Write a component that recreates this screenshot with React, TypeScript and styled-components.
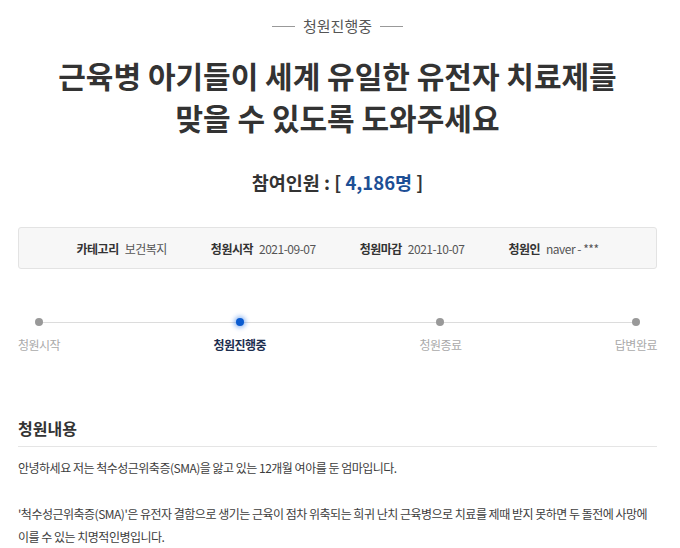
import React from 'react';
import styled, { createGlobalStyle } from 'styled-components';

const GlobalStyle = createGlobalStyle`
  html, body {
    margin: 0;
    padding: 0;
    background: #fff;
  }
  body {
    font-family: "Noto Sans CJK KR", "Noto Sans", sans-serif;
    color: #333;
  }
`;

const Page = styled.div`
  width: 639px;
  margin-left: 18px;
  padding-top: 16px;
`;

const Status = styled.div`
  display: flex;
  align-items: center;
  justify-content: center;
  gap: 8px;
  font-size: 15px;
  line-height: 20px;
  color: #555;
  font-feature-settings: "palt";
  &::before,
  &::after {
    content: '';
    width: 23px;
    height: 1px;
    background: #999;
  }
`;

const Title = styled.h1`
  margin: 18px 0 0;
  font-size: 30px;
  line-height: 42px;
  font-weight: 700;
  text-align: center;
  color: #333;
`;

const Count = styled.div`
  margin-top: 32px;
  text-align: center;
  font-size: 18.5px;
  line-height: 24px;
  font-weight: 700;
  color: #333;
  font-feature-settings: "palt";
`;

const Num = styled.span`
  color: #1d4f95;
`;

const InfoBox = styled.div`
  margin-top: 33px;
  height: 40px;
  border: 1px solid #e3e3e3;
  border-radius: 3px;
  background: #f7f7f7;
  display: flex;
  align-items: center;
  justify-content: center;
  gap: 44px;
  font-size: 12px;
  letter-spacing: -0.5px;
  font-feature-settings: "palt";
`;

const InfoItem = styled.div`
  display: flex;
  align-items: center;
  gap: 6px;
`;

const InfoLabel = styled.span`
  font-weight: 700;
  color: #333;
`;

const InfoValue = styled.span`
  color: #555;
`;

const Steps = styled.div`
  position: relative;
  margin-top: 49px;
  display: flex;
  justify-content: space-between;
  &::before {
    content: '';
    position: absolute;
    top: 4px;
    left: 20px;
    right: 21px;
    height: 1px;
    background: #dcdcdc;
  }
`;

const Step = styled.div`
  display: flex;
  flex-direction: column;
  align-items: center;
  gap: 10px;
`;

const Dot = styled.span<{ $active?: boolean }>`
  position: relative;
  z-index: 1;
  width: 8px;
  height: 8px;
  border-radius: 50%;
  background: ${(p) => (p.$active ? '#0a5bd0' : '#999')};
  box-shadow: ${(p) => (p.$active ? '0 0 4px 2px rgba(30, 110, 230, 0.45)' : 'none')};
`;

const StepLabel = styled.span<{ $active?: boolean }>`
  font-size: 12px;
  line-height: 18px;
  letter-spacing: -0.5px;
  font-weight: ${(p) => (p.$active ? 700 : 400)};
  color: ${(p) => (p.$active ? '#1c2d4f' : '#aaa')};
  font-feature-settings: "palt";
`;

const Heading = styled.h2`
  margin: 63px 0 0;
  padding-bottom: 7px;
  border-bottom: 1px solid #e5e5e5;
  font-size: 16px;
  line-height: 22px;
  font-weight: 700;
  color: #333;
  font-feature-settings: "palt";
`;

const Body = styled.div`
  margin-top: 9px;
  font-size: 12px;
  line-height: 23px;
  letter-spacing: -0.5px;
  color: #3d3d3d;
  font-feature-settings: "palt";
`;

const Para = styled.p`
  margin: 0 0 23px;
`;

const info = [
  { label: '카테고리', value: '보건복지' },
  { label: '청원시작', value: '2021-09-07' },
  { label: '청원마감', value: '2021-10-07' },
  { label: '청원인', value: 'naver - ***' },
];

const steps = ['청원시작', '청원진행중', '청원종료', '답변완료'];

const App = () => {
  return (
    <>
      <GlobalStyle />
      <Page>
        <Status>청원진행중</Status>
        <Title>
          근육병 아기들이 세계 유일한 유전자 치료제를
          <br />
          맞을 수 있도록 도와주세요
        </Title>
        <Count>
          참여인원 : [ <Num>4,186명</Num> ]
        </Count>
        <InfoBox>
          {info.map((item) => (
            <InfoItem key={item.label}>
              <InfoLabel>{item.label}</InfoLabel>
              <InfoValue>{item.value}</InfoValue>
            </InfoItem>
          ))}
        </InfoBox>
        <Steps>
          {steps.map((s, i) => (
            <Step key={s}>
              <Dot $active={i === 1} />
              <StepLabel $active={i === 1}>{s}</StepLabel>
            </Step>
          ))}
        </Steps>
        <Heading>청원내용</Heading>
        <Body>
          <Para>안녕하세요 저는 척수성근위축증(SMA)을 앓고 있는 12개월 여아를 둔 엄마입니다.</Para>
          <Para>
            '척수성근위축증(SMA)'은 유전자 결함으로 생기는 근육이 점차 위축되는 희귀 난치 근육병으로 치료를 제때 받지 못하면 두 돌전에 사망에 이를 수 있는 치명적인병입니다.
          </Para>
        </Body>
      </Page>
    </>
  );
};

export default App;
